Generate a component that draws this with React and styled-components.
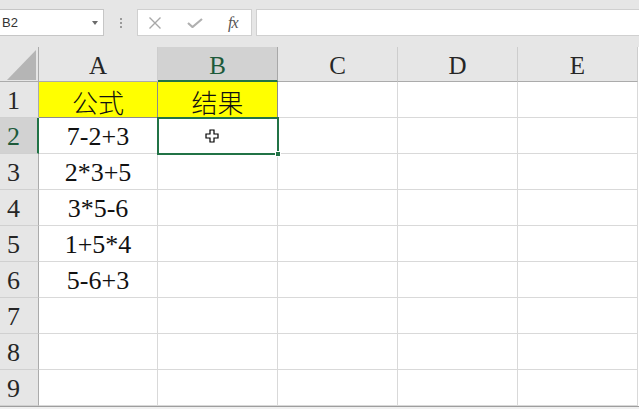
import React from 'react'
import styled, { createGlobalStyle } from 'styled-components'

const GlobalStyle = createGlobalStyle`
    html, body {
        margin: 0;
        padding: 0;
        background: #ffffff;
        overflow: hidden;
    }
`

const columns = ['A', 'B', 'C', 'D', 'E']
const widths = ['119px', '120px', '120px', '120px', '120px']

const rows = [
    ['公式', '结果'],
    ['7-2+3', ''],
    ['2*3+5', ''],
    ['3*5-6', ''],
    ['1+5*4', ''],
    ['5-6+3', ''],
    [],
    [],
    [],
]

const selected = { row: 2, col: 'B' }

const App = () => {
    return (
        <>
            <GlobalStyle />
            <StyledWindow>
                <StyledToolbar>
                    <StyledNameBox>
                        <span>B2</span>
                        <StyledArrow />
                    </StyledNameBox>
                    <StyledSplitter>
                        <i /><i /><i />
                    </StyledSplitter>
                    <StyledFormulaButtons>
                        <svg width="14" height="12" viewBox="0 0 14 12">
                            <path d="M1.5 0.5 L12.5 11.5 M12.5 0.5 L1.5 11.5" stroke="#a8a8a8" strokeWidth="1.4" fill="none" />
                        </svg>
                        <svg width="16" height="10" viewBox="0 0 16 10">
                            <path d="M1 5 L5.5 9 L15 1" stroke="#b0b0b0" strokeWidth="2.2" fill="none" />
                        </svg>
                        <StyledFx>fx</StyledFx>
                    </StyledFormulaButtons>
                    <StyledFormulaInput />
                </StyledToolbar>

                <StyledSheet>
                    <StyledGrid>
                        <StyledCorner>
                            <svg width="39" height="35" viewBox="0 0 39 35">
                                <polygon points="36,3 36,33 7,33" fill="#b5b5b5" />
                            </svg>
                        </StyledCorner>
                        {columns.map((c) => (
                            <StyledColHeader key={c} $active={c === selected.col}>{c}</StyledColHeader>
                        ))}
                        {rows.map((cells, i) => (
                            <React.Fragment key={i}>
                                <StyledRowHeader $active={i + 1 === selected.row}>{i + 1}</StyledRowHeader>
                                {columns.map((c, j) => (
                                    <StyledCell key={c} $fill={i === 0 && j < 2}>{cells[j] || ''}</StyledCell>
                                ))}
                            </React.Fragment>
                        ))}
                    </StyledGrid>

                    <StyledSelection>
                        <StyledHandle />
                    </StyledSelection>

                    <StyledCursor width="14" height="14" viewBox="0 0 14 14">
                        <path d="M5 1 H9 V5 H13 V9 H9 V13 H5 V9 H1 V5 H5 Z" fill="#ffffff" stroke="#000000" strokeWidth="1.2" />
                    </StyledCursor>
                </StyledSheet>
                <StyledBottom />
            </StyledWindow>
        </>
    )
}


const StyledWindow = styled.div`
    width: 639px;
    height: 409px;
    overflow: hidden;
    background: #ffffff;
    display: flex;
    flex-direction: column;
`

const StyledToolbar = styled.div`
    height: 47px;
    flex-shrink: 0;
    box-sizing: border-box;
    padding-top: 9px;
    background: #e6e6e6;
    display: flex;
    align-items: flex-start;
`

const StyledNameBox = styled.div`
    width: 104px;
    height: 27px;
    box-sizing: border-box;
    background: #ffffff;
    border: 1px solid #c6c6c6;
    border-left: none;
    display: flex;
    align-items: center;
    justify-content: space-between;
    padding: 0 5px 0 2px;
    font-family: "Liberation Sans", Arial, sans-serif;
    font-size: 13px;
    color: #333333;
`

const StyledArrow = styled.span`
    width: 0;
    height: 0;
    border-left: 3.5px solid transparent;
    border-right: 3.5px solid transparent;
    border-top: 4px solid #6b6b6b;
`

const StyledSplitter = styled.div`
    width: 33px;
    height: 27px;
    display: flex;
    flex-direction: column;
    align-items: center;
    justify-content: center;
    gap: 2px;

    i {
        display: block;
        width: 2px;
        height: 2px;
        background: #9a9a9a;
    }
`

const StyledFormulaButtons = styled.div`
    width: 115px;
    height: 27px;
    box-sizing: border-box;
    background: #ffffff;
    border: 1px solid #d0d0d0;
    display: flex;
    align-items: center;
    padding: 0 0 0 10px;
    gap: 24px;

    svg:nth-child(2) {
        margin-left: 1px;
    }
`

const StyledFx = styled.span`
    font-family: "Liberation Serif", "Times New Roman", serif;
    font-style: italic;
    font-size: 16px;
    color: #555555;
    margin-left: 1px;
    letter-spacing: -1px;
`

const StyledFormulaInput = styled.div`
    flex: 1;
    height: 27px;
    margin-left: 4px;
    box-sizing: border-box;
    background: #ffffff;
    border: 1px solid #d0d0d0;
    border-right: none;
`

const StyledSheet = styled.div`
    position: relative;
`

const StyledGrid = styled.div`
    display: grid;
    grid-template-columns: 39px ${widths.join(' ')};
    grid-template-rows: 35px;
    grid-auto-rows: 36px;
    font-family: "Liberation Serif", "Noto Sans CJK SC", serif;
`

const StyledCorner = styled.div`
    background: #e6e6e6;
    box-sizing: border-box;
    border-right: 1px solid #ababab;
    border-bottom: 1px solid #ababab;
    svg {
        display: block;
    }
`

const StyledColHeader = styled.div`
    box-sizing: border-box;
    background: ${(props) => (props.$active ? '#d2d2d2' : '#e6e6e6')};
    border-right: 1px solid ${(props) => (props.$active ? '#a8a8a8' : '#cdcdcd')};
    border-bottom: ${(props) => (props.$active ? '2px solid #217346' : '1px solid #ababab')};
    display: flex;
    align-items: center;
    justify-content: center;
    padding-top: 4px;
    font-size: 25px;
    color: ${(props) => (props.$active ? '#1d5a3a' : '#262626')};
`

const StyledRowHeader = styled.div`
    box-sizing: border-box;
    background: ${(props) => (props.$active ? '#d2d2d2' : '#e6e6e6')};
    border-right: ${(props) => (props.$active ? '2px solid #217346' : '1px solid #ababab')};
    border-bottom: 1px solid #d0d0d0;
    display: flex;
    align-items: center;
    padding: 3px 0 0 7px;
    font-size: 26px;
    color: ${(props) => (props.$active ? '#1d5a3a' : '#262626')};
`

const StyledCell = styled.div`
    box-sizing: border-box;
    background: ${(props) => (props.$fill ? '#ffff00' : '#ffffff')};
    border-right: 1px solid ${(props) => (props.$fill ? '#8c8c8c' : '#d9d9d9')};
    border-bottom: 1px solid ${(props) => (props.$fill ? '#8c8c8c' : '#d9d9d9')};
    display: flex;
    align-items: center;
    justify-content: center;
    padding-top: 3px;
    font-size: 26px;
    font-weight: 300;
    color: #111111;
    white-space: nowrap;
`

const StyledSelection = styled.div`
    position: absolute;
    left: 157px;
    top: 70px;
    width: 122px;
    height: 38px;
    box-sizing: border-box;
    border: 2px solid #217346;
    pointer-events: none;
`

const StyledHandle = styled.div`
    position: absolute;
    right: -4px;
    bottom: -4px;
    width: 6px;
    height: 6px;
    box-sizing: border-box;
    background: #217346;
    border: 1px solid #ffffff;
`

const StyledCursor = styled.svg`
    position: absolute;
    left: 205px;
    top: 82px;
`

const StyledBottom = styled.div`
    flex: 1;
    border-top: 1px solid #9e9e9e;
    background: #f0f0f0;
`


export default App
